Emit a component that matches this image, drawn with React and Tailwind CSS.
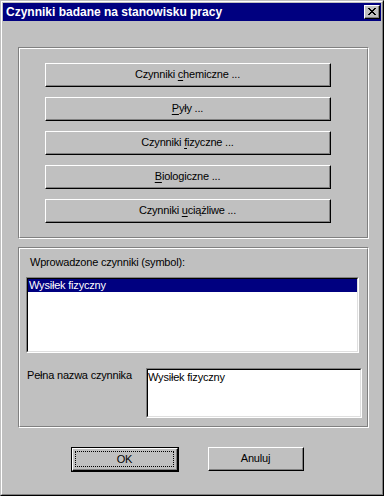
import React from 'react';

function Raised({ className = '', innerClassName = '', children }) {
  return (
    <div className={`bg-[#c0c0c0] border border-t-white border-l-white border-r-black border-b-black ${className}`}>
      <div className={`h-full w-full border-r border-b border-r-[#808080] border-b-[#808080] ${innerClassName}`}>
        {children}
      </div>
    </div>
  );
}

function Sunken({ className = '', children }) {
  return (
    <div className={`border border-t-[#808080] border-l-[#808080] border-r-white border-b-white ${className}`}>
      <div className="h-full w-full border border-t-black border-l-black border-r-[#dfdfdf] border-b-[#dfdfdf] bg-white">
        {children}
      </div>
    </div>
  );
}

function Etched({ className = '', innerClassName = '', children }) {
  return (
    <div className={`border border-t-[#808080] border-l-[#808080] border-r-white border-b-white ${className}`}>
      <div className={`h-full w-full border border-t-white border-l-white border-r-[#808080] border-b-[#808080] ${innerClassName}`}>
        {children}
      </div>
    </div>
  );
}

function FactorButton({ before, hot, after }) {
  return (
    <Raised className="w-[286px] h-[24px]" innerClassName="flex items-center justify-center">
      <span className="leading-[13px]">
        {before}
        <span className="underline underline-offset-[2px]">{hot}</span>
        {after}
      </span>
    </Raised>
  );
}

function CloseGlyph() {
  const rows = [
    'XX....XX',
    '.XX..XX.',
    '..XXXX..',
    '...XX...',
    '..XXXX..',
    '.XX..XX.',
    'XX....XX',
  ];
  return (
    <svg width="8" height="7" viewBox="0 0 8 7" shapeRendering="crispEdges">
      {rows.map((r, y) =>
        r.split('').map((c, x) =>
          c === 'X' ? <rect key={`${x}-${y}`} x={x} y={y} width="1" height="1" fill="#000" /> : null
        )
      )}
    </svg>
  );
}

export default function App() {
  return (
    <div className="w-[384px] h-[496px] bg-[#c0c0c0] border border-t-[#c0c0c0] border-l-[#c0c0c0] border-r-black border-b-black font-['Liberation_Sans',Arial,sans-serif] text-[11px] tracking-[-0.2px] text-black">
      <div className="h-full border border-t-white border-l-white border-r-[#808080] border-b-[#808080] p-[1px] flex flex-col">
        {/* title bar */}
        <div className="h-[18px] bg-[#000080] flex items-center justify-between pl-[3px] pr-[1px]">
          <span className="text-white font-bold text-[12px] tracking-normal leading-none">Czynniki badane na stanowisku pracy</span>
          <Raised className="w-[16px] h-[14px]" innerClassName="flex items-center justify-center pl-[1px]">
            <CloseGlyph />
          </Raised>
        </div>

        {/* factor buttons */}
        <Etched
          className="mt-[26px] ml-[15px] w-[351px] h-[192px]"
          innerClassName="flex flex-col items-start pt-[14px] pl-[25px] gap-[10px]"
        >
          <FactorButton before="Czynniki " hot="c" after="hemiczne ..." />
          <FactorButton before="" hot="P" after="yły ..." />
          <FactorButton before="Czynniki " hot="f" after="izyczne ..." />
          <FactorButton before="" hot="B" after="iologiczne ..." />
          <FactorButton before="Czynniki " hot="u" after="ciążliwe ..." />
        </Etched>

        {/* entered factors */}
        <Etched className="mt-[8px] ml-[15px] w-[351px] h-[181px]" innerClassName="flex flex-col pt-[7px]">
          <div className="ml-[10px] leading-[13px]">Wprowadzone czynniki (symbol):</div>
          <Sunken className="mt-[8px] ml-[6px] w-[333px] h-[76px]">
            <div className="h-[13px] bg-[#000080] text-white leading-[13px] pl-[1px]">Wysiłek fizyczny</div>
          </Sunken>
          <div className="mt-[15px] flex">
            <div className="ml-[7px] w-[119px] pt-[1px] leading-[13px]">Pełna nazwa czynnika</div>
            <Sunken className="w-[216px] h-[50px]">
              <div className="pt-[1px] leading-[13px]">Wysiłek fizyczny</div>
            </Sunken>
          </div>
        </Etched>

        {/* dialog buttons */}
        <div className="mt-[19px] flex items-start">
          <div className="ml-[68px] w-[108px] h-[25px] border border-black">
            <Raised className="h-full w-full" innerClassName="p-[2px]">
              <div className="h-full w-full border border-dotted border-black flex items-center justify-center leading-[13px]">
                OK
              </div>
            </Raised>
          </div>
          <Raised className="ml-[29px] w-[96px] h-[24px]" innerClassName="flex items-center justify-center">
            <span className="leading-[13px]">Anuluj</span>
          </Raised>
        </div>
      </div>
    </div>
  );
}
